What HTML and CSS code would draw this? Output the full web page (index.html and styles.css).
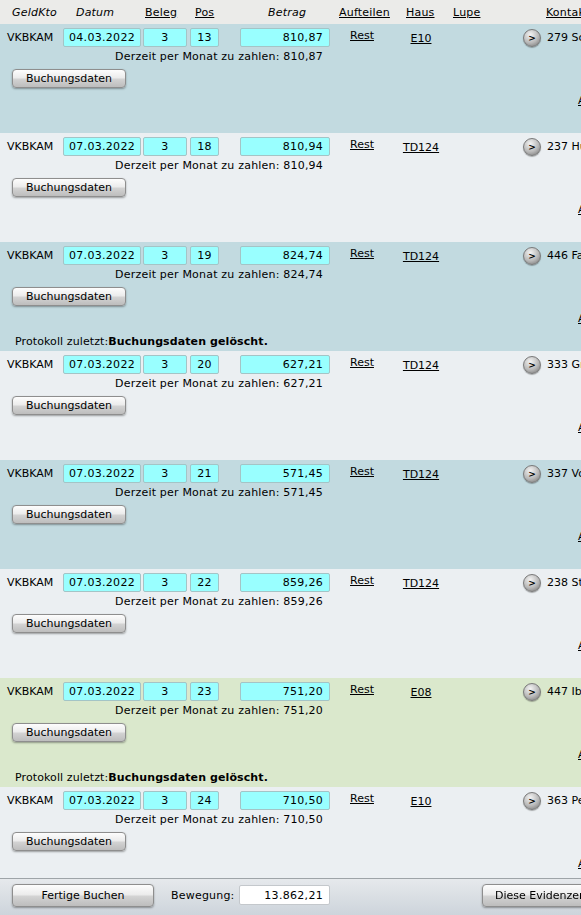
FILE: index.html
```html
<!DOCTYPE html>
<html lang="de">

<head>
    <meta charset="UTF-8">
    <title>Buchungen</title>
    <link rel="stylesheet" href="styles.css">
</head>

<body>
    <div class="liste">
        <div class="kopf">
            <span class="k-konto kursiv">GeldKto</span>
            <span class="k-datum kursiv">Datum</span>
            <a class="k-beleg" href="#">Beleg</a>
            <a class="k-pos" href="#">Pos</a>
            <span class="k-betrag kursiv">Betrag</span>
            <a class="k-aufteilen" href="#">Aufteilen</a>
            <a class="k-haus" href="#">Haus</a>
            <a class="k-lupe" href="#">Lupe</a>
            <a class="k-kontakt" href="#">Kontakt</a>
        </div>

        <div class="eintrag blau">
            <div class="haupt">
                <div class="zeile">
                    <span class="konto">VKBKAM</span>
                    <input class="fld datum" value="04.03.2022" readonly>
                    <input class="fld beleg" value="3" readonly>
                    <input class="fld pos" value="13" readonly>
                    <input class="fld betrag" value="810,87" readonly>
                    <a class="rest" href="#">Rest</a>
                    <a class="haus" href="#">E10</a>
                </div>
                <div class="monat">Derzeit per Monat zu zahlen: 810,87</div>
                <button class="knopf buchung">Buchungsdaten</button>
            </div>
            <div class="kontakt">
                <div class="kontakt-zeile"><button class="rund">&gt;</button><span>279 Schuster Karl</span></div>
                <a class="aendern" href="#">Anzeigen</a>
            </div>
        </div>

        <div class="eintrag hell">
            <div class="haupt">
                <div class="zeile">
                    <span class="konto">VKBKAM</span>
                    <input class="fld datum" value="07.03.2022" readonly>
                    <input class="fld beleg" value="3" readonly>
                    <input class="fld pos" value="18" readonly>
                    <input class="fld betrag" value="810,94" readonly>
                    <a class="rest" href="#">Rest</a>
                    <a class="haus" href="#">TD124</a>
                </div>
                <div class="monat">Derzeit per Monat zu zahlen: 810,94</div>
                <button class="knopf buchung">Buchungsdaten</button>
            </div>
            <div class="kontakt">
                <div class="kontakt-zeile"><button class="rund">&gt;</button><span>237 Huber Maria</span></div>
                <a class="aendern" href="#">Anzeigen</a>
            </div>
        </div>

        <div class="eintrag blau">
            <div class="haupt">
                <div class="zeile">
                    <span class="konto">VKBKAM</span>
                    <input class="fld datum" value="07.03.2022" readonly>
                    <input class="fld beleg" value="3" readonly>
                    <input class="fld pos" value="19" readonly>
                    <input class="fld betrag" value="824,74" readonly>
                    <a class="rest" href="#">Rest</a>
                    <a class="haus" href="#">TD124</a>
                </div>
                <div class="monat">Derzeit per Monat zu zahlen: 824,74</div>
                <button class="knopf buchung">Buchungsdaten</button>
                <div class="protokoll">Protokoll zuletzt:<b>Buchungsdaten gelöscht.</b></div>
            </div>
            <div class="kontakt">
                <div class="kontakt-zeile"><button class="rund">&gt;</button><span>446 Fasching Anna</span></div>
                <a class="aendern" href="#">Anzeigen</a>
            </div>
        </div>

        <div class="eintrag hell">
            <div class="haupt">
                <div class="zeile">
                    <span class="konto">VKBKAM</span>
                    <input class="fld datum" value="07.03.2022" readonly>
                    <input class="fld beleg" value="3" readonly>
                    <input class="fld pos" value="20" readonly>
                    <input class="fld betrag" value="627,21" readonly>
                    <a class="rest" href="#">Rest</a>
                    <a class="haus" href="#">TD124</a>
                </div>
                <div class="monat">Derzeit per Monat zu zahlen: 627,21</div>
                <button class="knopf buchung">Buchungsdaten</button>
            </div>
            <div class="kontakt">
                <div class="kontakt-zeile"><button class="rund">&gt;</button><span>333 Gruber Peter</span></div>
                <a class="aendern" href="#">Anzeigen</a>
            </div>
        </div>

        <div class="eintrag blau">
            <div class="haupt">
                <div class="zeile">
                    <span class="konto">VKBKAM</span>
                    <input class="fld datum" value="07.03.2022" readonly>
                    <input class="fld beleg" value="3" readonly>
                    <input class="fld pos" value="21" readonly>
                    <input class="fld betrag" value="571,45" readonly>
                    <a class="rest" href="#">Rest</a>
                    <a class="haus" href="#">TD124</a>
                </div>
                <div class="monat">Derzeit per Monat zu zahlen: 571,45</div>
                <button class="knopf buchung">Buchungsdaten</button>
            </div>
            <div class="kontakt">
                <div class="kontakt-zeile"><button class="rund">&gt;</button><span>337 Vogl Josef</span></div>
                <a class="aendern" href="#">Anzeigen</a>
            </div>
        </div>

        <div class="eintrag hell">
            <div class="haupt">
                <div class="zeile">
                    <span class="konto">VKBKAM</span>
                    <input class="fld datum" value="07.03.2022" readonly>
                    <input class="fld beleg" value="3" readonly>
                    <input class="fld pos" value="22" readonly>
                    <input class="fld betrag" value="859,26" readonly>
                    <a class="rest" href="#">Rest</a>
                    <a class="haus" href="#">TD124</a>
                </div>
                <div class="monat">Derzeit per Monat zu zahlen: 859,26</div>
                <button class="knopf buchung">Buchungsdaten</button>
            </div>
            <div class="kontakt">
                <div class="kontakt-zeile"><button class="rund">&gt;</button><span>238 Steiner Eva</span></div>
                <a class="aendern" href="#">Anzeigen</a>
            </div>
        </div>

        <div class="eintrag gruen">
            <div class="haupt">
                <div class="zeile">
                    <span class="konto">VKBKAM</span>
                    <input class="fld datum" value="07.03.2022" readonly>
                    <input class="fld beleg" value="3" readonly>
                    <input class="fld pos" value="23" readonly>
                    <input class="fld betrag" value="751,20" readonly>
                    <a class="rest" href="#">Rest</a>
                    <a class="haus" href="#">E08</a>
                </div>
                <div class="monat">Derzeit per Monat zu zahlen: 751,20</div>
                <button class="knopf buchung">Buchungsdaten</button>
                <div class="protokoll">Protokoll zuletzt:<b>Buchungsdaten gelöscht.</b></div>
            </div>
            <div class="kontakt">
                <div class="kontakt-zeile"><button class="rund">&gt;</button><span>447 Ibrahim Leyla</span></div>
                <a class="aendern" href="#">Anzeigen</a>
            </div>
        </div>

        <div class="eintrag hell">
            <div class="haupt">
                <div class="zeile">
                    <span class="konto">VKBKAM</span>
                    <input class="fld datum" value="07.03.2022" readonly>
                    <input class="fld beleg" value="3" readonly>
                    <input class="fld pos" value="24" readonly>
                    <input class="fld betrag" value="710,50" readonly>
                    <a class="rest" href="#">Rest</a>
                    <a class="haus" href="#">E10</a>
                </div>
                <div class="monat">Derzeit per Monat zu zahlen: 710,50</div>
                <button class="knopf buchung">Buchungsdaten</button>
            </div>
            <div class="kontakt">
                <div class="kontakt-zeile"><button class="rund">&gt;</button><span>363 Pesendorfer Franz</span></div>
                <a class="aendern" href="#">Anzeigen</a>
            </div>
        </div>
    </div>

    <div class="fuss">
        <button class="knopf fertig">Fertige Buchen</button>
        <span class="bewegung">Bewegung:</span>
        <input class="summe" value="13.862,21" readonly>
        <button class="knopf evidenz">Diese Evidenzen übernehmen</button>
    </div>
</body>

</html>
```

FILE: styles.css
```css
* {
    margin: 0;
    padding: 0;
    box-sizing: border-box;
}

body {
    font-family: "DejaVu Sans", Verdana, sans-serif;
    font-size: 11px;
    color: #000;
    background: #ebeff2;
    overflow: hidden;
    height: 100vh;
}

a {
    color: #000;
}

.liste {
    width: 760px;
}

/* Spaltenkopf */
.kopf {
    display: flex;
    align-items: center;
    height: 24px;
    background: #ebebe9;
    line-height: 14px;
    letter-spacing: 0.2px;
}

.kopf span,
.kopf a {
    flex: none;
    padding-top: 1px;
}

.kursiv {
    font-style: italic;
}

.k-konto {
    width: 76px;
    padding-left: 12px;
}

.k-datum {
    width: 69px;
}

.k-beleg {
    width: 50px;
}

.k-pos {
    width: 73px;
}

.k-betrag {
    width: 71px;
}

.k-aufteilen {
    width: 67px;
}

.k-haus {
    width: 47px;
}

.k-lupe {
    width: 93px;
}

/* Buchungszeilen */
.eintrag {
    display: flex;
    height: 109px;
    padding-top: 4px;
}

.blau {
    background: #c2dae0;
}

.hell {
    background: #ebeff2;
}

.gruen {
    background: #dae8cc;
}

.haupt {
    width: 523px;
    flex: none;
}

.zeile {
    display: flex;
    align-items: center;
    height: 19px;
}

.konto {
    width: 63px;
    padding-left: 7px;
}

.fld {
    height: 19px;
    font: inherit;
    letter-spacing: 0.3px;
    background: #9ff;
    border: 1px solid #a4c4c6;
    border-radius: 2px;
    text-align: center;
    color: #000;
    outline: none;
}

.datum {
    width: 78px;
    margin-right: 2px;
}

.beleg {
    width: 44px;
    margin-right: 3px;
}

.pos {
    width: 29px;
    margin-right: 21px;
}

.betrag {
    width: 90px;
    text-align: right;
    padding-right: 6px;
}

.rest {
    width: 65px;
    padding-left: 20px;
    margin-top: -5px;
}

.haus {
    width: 52px;
    text-align: center;
    margin-top: 2px;
}

.monat {
    margin-top: 3px;
    line-height: 13px;
    width: 323px;
    text-align: right;
    letter-spacing: 0.2px;
}

.knopf {
    font: inherit;
    color: #000;
    border: 1px solid #8e8e8e;
    border-radius: 4px;
    background: linear-gradient(#fdfdfd, #ececec 45%, #d2d2d2 55%, #bdbdbd);
    box-shadow: 0 1px 2px rgba(0, 0, 0, 0.35);
    cursor: pointer;
}

.buchung {
    display: block;
    width: 114px;
    height: 19px;
    margin: 6px 0 0 12px;
}

.protokoll {
    margin-top: 29px;
    padding-left: 15px;
    line-height: 13px;
    letter-spacing: 0.1px;
}

/* Kontakt-Spalte */
.kontakt {
    flex: none;
    width: 237px;
}

.kontakt-zeile {
    display: flex;
    align-items: center;
    gap: 6px;
    height: 19px;
    white-space: nowrap;
}

.rund {
    width: 18px;
    height: 18px;
    border-radius: 50%;
    border: 1px solid #7a7a7a;
    background: radial-gradient(circle at 40% 30%, #f4f4f4, #b8b8b8 55%, #6e6e6e);
    font: bold 9px "DejaVu Sans", sans-serif;
    color: #000;
    line-height: 14px;
    box-shadow: 0 1px 1px rgba(0, 0, 0, 0.3);
}

.aendern {
    display: block;
    margin: 47px 0 0 55px;
    line-height: 13px;
}

/* Fußleiste */
.fuss {
    position: fixed;
    left: 0;
    right: 0;
    bottom: 0;
    height: 37px;
    display: flex;
    align-items: center;
    padding: 0 0 4px 12px;
    border-top: 1px solid #9ea4a8;
    background: linear-gradient(#e6e9ec, #cdd4db);
    white-space: nowrap;
}

.fertig {
    width: 142px;
    height: 23px;
    flex: none;
}

.bewegung {
    margin-left: 17px;
    width: 68px;
    flex: none;
    letter-spacing: 0.2px;
}

.summe {
    width: 91px;
    height: 20px;
    flex: none;
    font: inherit;
    letter-spacing: 0.3px;
    text-align: right;
    padding-right: 6px;
    border: 1px solid #c4c8cc;
    border-radius: 2px;
    background: #fff;
    outline: none;
}

.evidenz {
    flex: none;
    height: 23px;
    margin-left: 152px;
    padding: 0 12px;
}
```
